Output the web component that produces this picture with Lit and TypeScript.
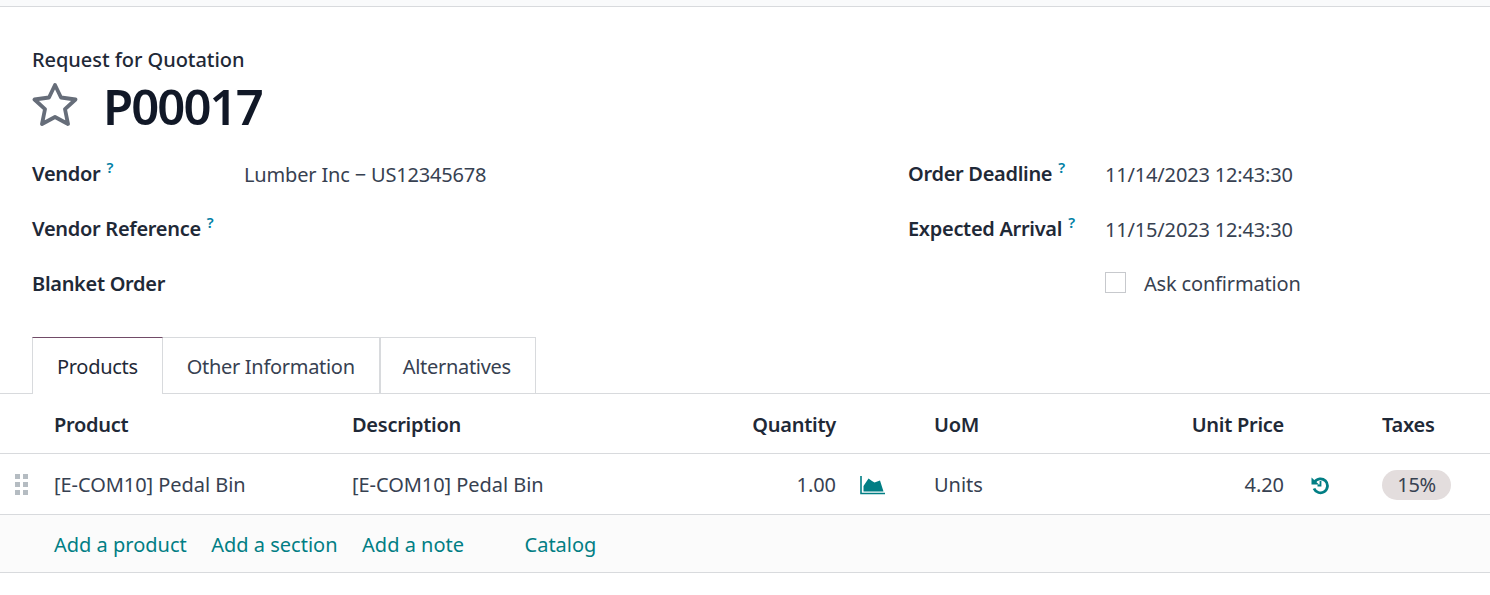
import { LitElement, html, css, svg } from "lit";
import { customElement } from "lit/decorators.js";

@customElement("app-root")
export class AppRoot extends LitElement {
  static styles = css`
    :host { display: block; width: 1490px; height: 595px; overflow: hidden; background: #fff;
      font-family: "Noto Sans", sans-serif; font-size: 20px; color: #374151; line-height: 28px; }
    .strip { height: 6px; background: #f9fafb; border-bottom: 1px solid #d8dadd; }
    .head { padding: 39px 32px 0; }
    .kind { color: #1f2937; font-weight: 500; height: 28px; letter-spacing: -0.05px; }
    .title { display: flex; align-items: center; height: 64px; }
    .title svg { width: 47px; height: 47px; display: block; margin-top: -1px; }
    .title h1 { margin: 0 0 0 24px; font-size: 49px; line-height: 64px; font-weight: 600; color: #111827; letter-spacing: -1.9px; }
    .form { display: grid; grid-template-columns: 876px 1fr; padding: 12px 32px 0; }
    .col { display: flex; flex-direction: column; gap: 27px; padding-top: 10px; }
    .row { display: flex; height: 28px; align-items: center; }
    .left .lab { width: 212px; }
    .right .lab { width: 197px; }
    .lab { font-weight: 600; color: #1f2937; flex: none; display: flex; align-items: flex-start; letter-spacing: -0.3px; }
    .val { letter-spacing: -0.17px; padding-top: 2px; }
    .ask { letter-spacing: -0.17px; }
    .q { font-size: 15px; line-height: 18px; color: #0180a5; margin-left: 6px; font-weight: 600; margin-top: -2px; letter-spacing: 0; }
    .check { width: 21px; height: 21px; border: 1px solid #c7c9cd; box-sizing: border-box; margin-right: 18px; margin-top: -3px; }
    .tabs { display: flex; margin-top: 39px; padding-left: 32px; height: 57px; box-sizing: border-box; border-bottom: 1px solid #d8dadd; letter-spacing: -0.3px; }
    .tab { height: 56px; box-sizing: border-box; border: 1px solid #d8dadd; border-bottom: 0; padding: 15px 24px 0; color: #374151; }
    .tab.active { border-top-color: #714b67; color: #1f2937; height: 57px; background: #fff; }
    .tab.b { border-left-width: 0; }
    .tab.c { padding-left: 22px; }
    .tbl-row { display: grid; align-items: center; grid-template-columns: 54px 298px 260px 224px 98px 250px 100px 98px 1fr; box-sizing: border-box; padding-top: 2px; }
    .hd { height: 60px; border-bottom: 1px solid #d8dadd; font-weight: 600; color: #1f2937; letter-spacing: -0.27px; }
    .dt { height: 61px; border-bottom: 1px solid #d8dadd; letter-spacing: -0.05px; }
    .r { text-align: right; }
    .grip { display: grid; grid-template-columns: 5px 5px; gap: 3px; width: 13px; margin-left: 15px; margin-top: -2px; }
    .grip i { height: 5px; background: #b5bcc2; display: block; }
    .ic { display: block; width: 26px; height: 20px; margin-left: 24px; }
    .ic2 { display: block; width: 20px; height: 20px; margin-left: 26px; }
    .pill { display: inline-block; background: #e3dddd; color: #374151; border-radius: 15px; width: 69px; height: 30px; line-height: 30px; text-align: center; box-sizing: border-box; letter-spacing: -0.4px; }
    .foot { height: 58px; box-sizing: border-box; padding-top: 2px; background: #fbfbfb; border-bottom: 1px solid #d8dadd; display: flex; align-items: center; padding-left: 54px; gap: 24.5px; color: #017e84; }
    .cat { margin-left: 36px; }
  `;

  render() {
    const star = svg`<path d="M23 3 L29 15.5 L43.5 17.5 L33 27.2 L36 42 L23 35 L10 42 L13 27.2 L2.5 17.5 L17 15.5 Z" fill="none" stroke="#666d79" stroke-width="3.8" stroke-linejoin="round"/>`;
    return html`
      <div class="strip"></div>
      <div class="head">
        <div class="kind">Request for Quotation</div>
        <div class="title">
          <svg viewBox="0 0 47 47">${star}</svg>
          <h1>P00017</h1>
        </div>
      </div>
      <div class="form">
        <div class="col left">
          <div class="row"><div class="lab">Vendor<span class="q">?</span></div><div class="val">Lumber Inc − US12345678</div></div>
          <div class="row"><div class="lab">Vendor Reference<span class="q">?</span></div></div>
          <div class="row"><div class="lab">Blanket Order</div></div>
        </div>
        <div class="col right">
          <div class="row"><div class="lab">Order Deadline<span class="q">?</span></div><div class="val">11/14/2023 12:43:30</div></div>
          <div class="row"><div class="lab">Expected Arrival<span class="q">?</span></div><div class="val">11/15/2023 12:43:30</div></div>
          <div class="row"><div class="lab"></div><span class="check"></span><div class="ask">Ask confirmation</div></div>
        </div>
      </div>
      <div class="tabs">
        <div class="tab active">Products</div>
        <div class="tab b">Other Information</div>
        <div class="tab c">Alternatives</div>
      </div>
      <div class="tbl-row hd">
        <span></span><span>Product</span><span>Description</span><span class="r">Quantity</span><span></span>
        <span>UoM</span><span class="r">Unit Price</span><span></span><span>Taxes</span>
      </div>
      <div class="tbl-row dt">
        <div class="grip"><i></i><i></i><i></i><i></i><i></i><i></i></div>
        <span>[E-COM10] Pedal Bin</span><span>[E-COM10] Pedal Bin</span><span class="r">1.00</span>
        <svg class="ic" viewBox="0 0 26 20"><path d="M1 1V18.5H25" fill="none" stroke="#017e84" stroke-width="1.6"/><path d="M3.5 16.5V11L8.5 3.5L12 6L14.5 7.5L20 5.5L23.5 16.5Z" fill="#017e84"/></svg>
        <span>Units</span><span class="r">4.20</span>
        <svg class="ic2" viewBox="0 0 20 20"><path d="M4.6 7A7 7 0 1 1 4 13.5" fill="none" stroke="#017e84" stroke-width="2.8"/><path d="M1.5 2.5L9 9.5H1.5Z" fill="#017e84"/><path d="M10.5 6V10.5H7.5" fill="none" stroke="#017e84" stroke-width="1.8"/></svg>
        <span><span class="pill">15%</span></span>
      </div>
      <div class="foot">
        <span>Add a product</span><span>Add a section</span><span>Add a note</span><span class="cat">Catalog</span>
      </div>
    `;
  }
}
